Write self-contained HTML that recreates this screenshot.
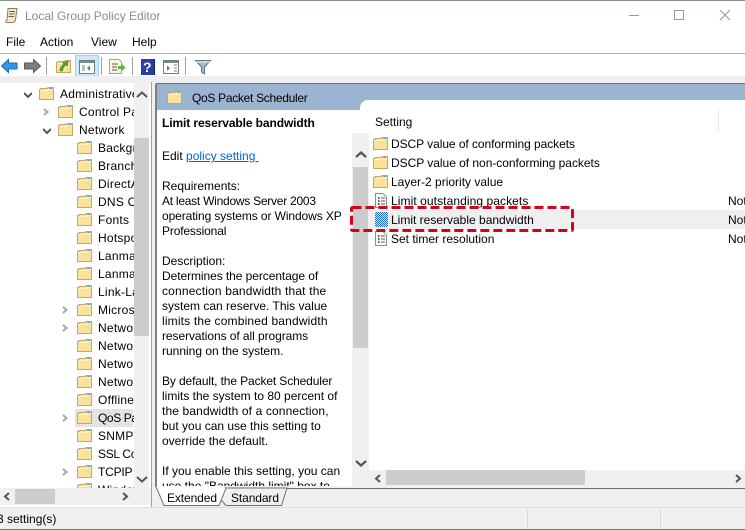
<!DOCTYPE html>
<html><head><meta charset="utf-8"><style>
html,body{margin:0;padding:0;width:745px;height:530px;overflow:hidden;background:#fff}
body{position:relative;font:12px/15px "Liberation Sans",sans-serif;color:#000}
.b{position:absolute}
.t{position:absolute;white-space:nowrap;line-height:15px;transform:translateY(1px)}
.clip{position:absolute;overflow:hidden}
svg.i{position:absolute;overflow:visible}
#tree{position:absolute;left:0;top:82px;width:134px;height:406px;overflow:hidden}
#tree .t{letter-spacing:.25px}
#desc{position:absolute;left:157px;top:110px;width:195px;height:376px;overflow:hidden;background:#fff}
</style></head><body>
<svg width="0" height="0" style="position:absolute"><defs>
<symbol id="f" viewBox="0 0 15 14"><path d="M.5 12.500V2.500H2V1.500H8L9 .5H14.500V12.500Z" fill="#fbe19a" stroke="#c7a862"/><path d="M1 3.500H8.500L10 2.500H14" fill="none" stroke="#fff3c8"/><path d="M10 1.500H13.500" stroke="#57a0de" stroke-width="1"/></symbol>
<symbol id="d" viewBox="0 0 15 15"><path d="M2.500.5H10L13.500 4V14.500H2.500Z" fill="#fff" stroke="#8c8c8c"/><path d="M5 5H6.500M5 8H6.500M5 11H6.500" stroke="#222" stroke-width="1.600"/><path d="M8 5H12M8 8H12M8 11H12" stroke="#555"/></symbol>
<symbol id="c" viewBox="0 0 8 8"><path d="M1 7L4.500 4L1 1" fill="none" stroke="#a6a6a6" stroke-width="2"/></symbol>
<symbol id="o" viewBox="0 0 8 8"><path d="M0 2L4 6L8 2" fill="none" stroke="#555" stroke-width="2"/></symbol>
<pattern id="ck" width="2" height="2" patternUnits="userSpaceOnUse"><rect width="2" height="2" fill="#1f72c8"/><rect width="1" height="1" fill="#cfe3f5"/><rect x="1" y="1" width="1" height="1" fill="#cfe3f5"/></pattern>
</defs></svg>

<!-- top strip -->
<div class="b" style="left:0;top:0;width:745px;height:1px;background:#8a9593"></div>
<!-- title -->
<svg class="i" style="left:5px;top:8px" width="13" height="15" viewBox="0 0 13 15"><path d="M3 .5H12L10.500 11.500Q10 14 8 14.500H1Q.5 12.500 2 12Z" fill="#f4e9c8" stroke="#8b7f5c"/><path d="M4.500 3.500H10M4 6H9.500M3.500 8.500H9" stroke="#6b6248"/></svg>
<div class="t" style="left:25px;top:8px;color:#8c8c8c;font-size:12px">Local Group Policy Editor</div>
<div class="b" style="left:629px;top:15px;width:10px;height:1px;background:#999"></div>
<div class="b" style="left:674px;top:10px;width:8px;height:8px;border:1px solid #999"></div>
<svg class="i" style="left:720px;top:10px" width="10" height="10"><path d="M0 0L10 10M10 0L0 10" stroke="#999"/></svg>
<!-- menu -->
<div class="t" style="left:6px;top:34px">File</div>
<div class="t" style="left:40px;top:34px">Action</div>
<div class="t" style="left:91px;top:34px">View</div>
<div class="t" style="left:132px;top:34px">Help</div>
<div class="b" style="left:0;top:53px;width:745px;height:1px;background:#b4b1bd"></div>
<!-- toolbar -->
<svg class="i" style="left:1px;top:59px" width="17" height="14"><path d="M7.500 .5L.5 7L7.500 13.500V10H16V4H7.500Z" fill="#2f95e4" stroke="#1a6bb0"/></svg>
<svg class="i" style="left:24px;top:59px" width="17" height="14"><path d="M9.500 .5L16.500 7L9.500 13.500V10H.5V4H9.500Z" fill="#7d7d7d" stroke="#5a5a5a"/></svg>
<div class="b" style="left:46px;top:57px;width:1px;height:18px;background:#a0a0a0"></div>
<svg class="i" style="left:56px;top:59px" width="15" height="15"><use href="#f" width="15" height="14" y="1"/><path d="M4 12C4 8 6 6 8 5L6.500 3.500L12 2.500L11.500 7L10 6C8 7 7 9 6.500 12Z" fill="#4aa52e" stroke="#2f7a1a" stroke-width=".5"/></svg>
<div class="b" style="left:75px;top:55px;width:22px;height:20px;background:#cce8ff;border:1px solid #99d1ff"></div>
<svg class="i" style="left:79px;top:60px" width="16" height="15"><rect x=".5" y=".5" width="15" height="13" fill="#fff" stroke="#6e7f80"/><rect x="1" y="1" width="14" height="2" fill="#7a8a8c"/><path d="M3 6H6M3 8H6M3 10H6" stroke="#6e7f80"/><path d="M11 5.500V11L8 8.200Z" fill="#2d9a4a"/></svg>
<div class="b" style="left:101px;top:57px;width:1px;height:18px;background:#a0a0a0"></div>
<svg class="i" style="left:109px;top:59px" width="17" height="15"><path d="M.5 .5H10L12.500 3V14.500H.5Z" fill="#fbf6dc" stroke="#a8a28a"/><path d="M3 5H9M3 8H8M3 11H8" stroke="#555"/><path d="M9 7H12.500V4.500L16.500 8.500L12.500 12.500V10H9Z" fill="#62b83f"/></svg>
<div class="b" style="left:132px;top:57px;width:1px;height:18px;background:#a0a0a0"></div>
<div class="b" style="left:141px;top:59px;width:13px;height:16px;background:#2a3f9e;border-right:1px solid #16236a"></div>
<div class="t" style="left:143px;top:58px;color:#fff;font:bold 14px/16px 'Liberation Sans',sans-serif">?</div>
<svg class="i" style="left:163px;top:60px" width="16" height="15"><rect x=".5" y=".5" width="15" height="13" fill="#fff" stroke="#6e7f80"/><rect x="1" y="1" width="14" height="2" fill="#7a8a8c"/><path d="M11 5H14M11 8H14M11 11H14" stroke="#6e7f80"/><path d="M4 5.500V11L7 8.200Z" fill="#2d9a4a"/></svg>
<div class="b" style="left:185px;top:57px;width:1px;height:18px;background:#a0a0a0"></div>
<svg class="i" style="left:195px;top:60px" width="16" height="15"><path d="M.5 .5H15.500L9.500 7V14L6.500 12V7Z" fill="#a9bccb" stroke="#64767f"/><path d="M1 2H15" stroke="#e8eef2"/></svg>
<!-- gray band -->
<div class="b" style="left:0;top:76px;width:745px;height:7px;background:#efefef"></div>
<div class="b" style="left:156px;top:83px;width:589px;height:1px;background:#6e6e6e"></div>
<div class="b" style="left:152px;top:82px;width:4px;height:425px;background:#f0f0f0"></div>
<div class="b" style="left:151px;top:82px;width:1px;height:425px;background:#a0a0a0"></div>
<div class="b" style="left:155px;top:84px;width:2px;height:403px;background:#7f7f7f"></div>
<!-- blue header -->
<div class="b" style="left:157px;top:84px;width:588px;height:26px;background:#9ab4d2"></div>
<svg class="i" style="left:167px;top:91px" width="15" height="14"><use href="#f" width="15" height="14"/></svg>
<div class="t" style="left:192px;top:90px;letter-spacing:-.3px">QoS Packet Scheduler</div>

<!-- right pane -->
<div class="b" style="left:360px;top:100px;width:385px;height:386px;background:#fff;border-top-left-radius:8px"></div>
<div class="b" style="left:352px;top:110px;width:8px;height:376px;background:#fff"></div>
<div class="t" style="left:375px;top:114px">Setting</div>
<div class="b" style="left:718px;top:110px;width:1px;height:23px;background:#e5e5e5"></div>
<div class="b" style="left:369px;top:210px;width:376px;height:19px;background:#efefef"></div>
<svg class="i" style="left:373px;top:137px" width="15" height="14"><use href="#f" width="15" height="14"/></svg>
<svg class="i" style="left:373px;top:156px" width="15" height="14"><use href="#f" width="15" height="14"/></svg>
<svg class="i" style="left:373px;top:175px" width="15" height="14"><use href="#f" width="15" height="14"/></svg>
<svg class="i" style="left:373px;top:193px" width="15" height="15"><use href="#d" width="15" height="15"/></svg>
<svg class="i" style="left:375px;top:212px" width="13" height="15"><rect x="0" y="0" width="13" height="15" fill="url(#ck)"/></svg>
<svg class="i" style="left:373px;top:231px" width="15" height="15"><use href="#d" width="15" height="15"/></svg>
<div class="t" style="left:391px;top:136px;letter-spacing:-.06px">DSCP value of conforming packets</div>
<div class="t" style="left:391px;top:155px;letter-spacing:-.03px">DSCP value of non-conforming packets</div>
<div class="t" style="left:391px;top:174px">Layer-2 priority value</div>
<div class="t" style="left:391px;top:193px;letter-spacing:.08px">Limit outstanding packets</div>
<div class="t" style="left:391px;top:212px">Limit reservable bandwidth</div>
<div class="t" style="left:391px;top:231px">Set timer resolution</div>
<div class="clip" style="left:728px;top:193px;width:17px;height:17px"><div class="t" style="left:0;top:0">Not</div></div>
<div class="clip" style="left:728px;top:212px;width:17px;height:17px"><div class="t" style="left:0;top:0">Not</div></div>
<div class="clip" style="left:728px;top:231px;width:17px;height:17px"><div class="t" style="left:0;top:0">Not</div></div>
<!-- right v-scroll -->
<div class="b" style="left:352px;top:133px;width:17px;height:353px;background:#f0f0f0"></div>
<div class="b" style="left:353px;top:167px;width:15px;height:181px;background:#cdcdcd"></div>
<svg class="i" style="left:355px;top:150px" width="12" height="9"><path d="M1 7L6 2.500L11 7" fill="none" stroke="#555" stroke-width="2.200"/></svg>
<svg class="i" style="left:355px;top:459px" width="12" height="9"><path d="M1 2L6 6.500L11 2" fill="none" stroke="#555" stroke-width="2.200"/></svg>
<!-- right h-scroll -->
<div class="b" style="left:369px;top:470px;width:376px;height:16px;background:#f0f0f0"></div>
<div class="b" style="left:386px;top:470px;width:199px;height:15px;background:#cdcdcd"></div>
<svg class="i" style="left:374px;top:474px" width="8" height="9"><path d="M6 1L2 4.500L6 8" fill="none" stroke="#555" stroke-width="2"/></svg>
<svg class="i" style="left:734px;top:474px" width="8" height="9"><path d="M2 1L6 4.500L2 8" fill="none" stroke="#555" stroke-width="2"/></svg>

<!-- description -->
<div id="desc">
<div class="t" style="left:5px;top:5px;font-weight:bold;letter-spacing:-.1px">Limit reservable bandwidth</div>
<div class="t" style="left:5px;top:38px">Edit <span style="color:#0066cc;text-decoration:underline">policy setting&nbsp;</span></div>
<div class="t" style="left:5px;top:68px">Requirements:</div>
<div class="t" style="left:5px;top:83px;letter-spacing:-.25px">At least Windows Server 2003</div>
<div class="t" style="left:5px;top:98px;letter-spacing:-.1px">operating systems or Windows XP</div>
<div class="t" style="left:5px;top:113px;letter-spacing:-.15px">Professional</div>
<div class="t" style="left:5px;top:143px">Description:</div>
<div class="t" style="left:5px;top:158px;letter-spacing:-.07px">Determines the percentage of</div>
<div class="t" style="left:5px;top:173px;letter-spacing:.17px">connection bandwidth that the</div>
<div class="t" style="left:5px;top:188px">system can reserve. This value</div>
<div class="t" style="left:5px;top:203px;letter-spacing:.17px">limits the combined bandwidth</div>
<div class="t" style="left:5px;top:218px;letter-spacing:-.07px">reservations of all programs</div>
<div class="t" style="left:5px;top:233px">running on the system.</div>
<div class="t" style="left:5px;top:263px;letter-spacing:-.12px">By default, the Packet Scheduler</div>
<div class="t" style="left:5px;top:278px">limits the system to 80 percent of</div>
<div class="t" style="left:5px;top:293px;letter-spacing:.13px">the bandwidth of a connection,</div>
<div class="t" style="left:5px;top:308px">but you can use this setting to</div>
<div class="t" style="left:5px;top:323px">override the default.</div>
<div class="t" style="left:5px;top:353px">If you enable this setting, you can</div>
<div class="t" style="left:5px;top:368px">use the "Bandwidth limit" box to</div>
</div>

<!-- tree -->
<div id="tree">
<svg class="i" style="left:24px;top:9px" width="8" height="7"><use href="#o" width="8" height="8"/></svg>
<svg class="i" style="left:43px;top:26px" width="7" height="9"><use href="#c" width="8" height="8"/></svg>
<svg class="i" style="left:43px;top:45px" width="8" height="7"><use href="#o" width="8" height="8"/></svg>
<svg class="i" style="left:62px;top:224px" width="7" height="9"><use href="#c" width="8" height="8"/></svg>
<svg class="i" style="left:62px;top:242px" width="7" height="9"><use href="#c" width="8" height="8"/></svg>
<svg class="i" style="left:62px;top:332px" width="7" height="9"><use href="#c" width="8" height="8"/></svg>
<svg class="i" style="left:62px;top:386px" width="7" height="9"><use href="#c" width="8" height="8"/></svg>
<div class="b" style="left:75px;top:327px;width:58px;height:18px;background:#e3e3e3"></div>
<svg class="i" style="left:39px;top:5px" width="15" height="14"><use href="#f" width="15" height="14"/></svg>
<svg class="i" style="left:58px;top:23px" width="15" height="14"><use href="#f" width="15" height="14"/></svg>
<svg class="i" style="left:58px;top:41px" width="15" height="14"><use href="#f" width="15" height="14"/></svg>
<svg class="i" style="left:77px;top:59px" width="15" height="14"><use href="#f" width="15" height="14"/></svg>
<svg class="i" style="left:77px;top:77px" width="15" height="14"><use href="#f" width="15" height="14"/></svg>
<svg class="i" style="left:77px;top:95px" width="15" height="14"><use href="#f" width="15" height="14"/></svg>
<svg class="i" style="left:77px;top:113px" width="15" height="14"><use href="#f" width="15" height="14"/></svg>
<svg class="i" style="left:77px;top:131px" width="15" height="14"><use href="#f" width="15" height="14"/></svg>
<svg class="i" style="left:77px;top:149px" width="15" height="14"><use href="#f" width="15" height="14"/></svg>
<svg class="i" style="left:77px;top:167px" width="15" height="14"><use href="#f" width="15" height="14"/></svg>
<svg class="i" style="left:77px;top:185px" width="15" height="14"><use href="#f" width="15" height="14"/></svg>
<svg class="i" style="left:77px;top:203px" width="15" height="14"><use href="#f" width="15" height="14"/></svg>
<svg class="i" style="left:77px;top:221px" width="15" height="14"><use href="#f" width="15" height="14"/></svg>
<svg class="i" style="left:77px;top:239px" width="15" height="14"><use href="#f" width="15" height="14"/></svg>
<svg class="i" style="left:77px;top:257px" width="15" height="14"><use href="#f" width="15" height="14"/></svg>
<svg class="i" style="left:77px;top:275px" width="15" height="14"><use href="#f" width="15" height="14"/></svg>
<svg class="i" style="left:77px;top:293px" width="15" height="14"><use href="#f" width="15" height="14"/></svg>
<svg class="i" style="left:77px;top:311px" width="15" height="14"><use href="#f" width="15" height="14"/></svg>
<svg class="i" style="left:77px;top:329px" width="15" height="14"><use href="#f" width="15" height="14"/></svg>
<svg class="i" style="left:77px;top:347px" width="15" height="14"><use href="#f" width="15" height="14"/></svg>
<svg class="i" style="left:77px;top:365px" width="15" height="14"><use href="#f" width="15" height="14"/></svg>
<svg class="i" style="left:77px;top:383px" width="15" height="14"><use href="#f" width="15" height="14"/></svg>
<svg class="i" style="left:77px;top:401px" width="15" height="14"><use href="#f" width="15" height="14"/></svg>
<div class="t" style="left:60px;top:4px">Administrative Templates</div>
<div class="t" style="left:79px;top:22px">Control Panel</div>
<div class="t" style="left:79px;top:40px">Network</div>
<div class="t" style="left:98px;top:58px">Background</div>
<div class="t" style="left:98px;top:76px">BranchCache</div>
<div class="t" style="left:98px;top:94px">DirectAccess</div>
<div class="t" style="left:98px;top:112px">DNS Client</div>
<div class="t" style="left:98px;top:130px">Fonts</div>
<div class="t" style="left:98px;top:148px">Hotspot</div>
<div class="t" style="left:98px;top:166px">Lanman</div>
<div class="t" style="left:98px;top:184px">Lanman</div>
<div class="t" style="left:98px;top:202px">Link-Layer</div>
<div class="t" style="left:98px;top:220px">Microsoft</div>
<div class="t" style="left:98px;top:238px">Network</div>
<div class="t" style="left:98px;top:256px">Network</div>
<div class="t" style="left:98px;top:274px">Network</div>
<div class="t" style="left:98px;top:292px">Network</div>
<div class="t" style="left:98px;top:310px">Offline</div>
<div class="t" style="left:98px;top:328px;letter-spacing:-.4px">QoS Packet</div>
<div class="t" style="left:98px;top:346px">SNMP</div>
<div class="t" style="left:98px;top:364px;letter-spacing:-.3px">SSL Config</div>
<div class="t" style="left:98px;top:382px;letter-spacing:-.2px">TCPIP Settings</div>
<div class="t" style="left:98px;top:400px">Windows</div>
</div>
<!-- tree v-scroll -->
<div class="b" style="left:134px;top:82px;width:15px;height:406px;background:#f0f0f0"></div>
<div class="b" style="left:134px;top:138px;width:15px;height:198px;background:#cdcdcd"></div>
<svg class="i" style="left:136px;top:90px" width="12" height="9"><path d="M1 7L6 2.500L11 7" fill="none" stroke="#555" stroke-width="2"/></svg>
<svg class="i" style="left:136px;top:475px" width="12" height="9"><path d="M1 2L6 6.500L11 2" fill="none" stroke="#555" stroke-width="2"/></svg>
<!-- tree h-scroll -->
<div class="b" style="left:0;top:488px;width:134px;height:17px;background:#f0f0f0"></div>
<div class="b" style="left:134px;top:488px;width:17px;height:17px;background:#f0f0f0"></div>
<div class="b" style="left:15px;top:489px;width:40px;height:15px;background:#cdcdcd"></div>
<svg class="i" style="left:3px;top:492px" width="8" height="9"><path d="M6 1L2 4.500L6 8" fill="none" stroke="#555" stroke-width="2"/></svg>
<svg class="i" style="left:121px;top:492px" width="8" height="9"><path d="M2 1L6 4.500L2 8" fill="none" stroke="#555" stroke-width="2"/></svg>

<!-- tabs strip -->
<div class="b" style="left:156px;top:486px;width:589px;height:21px;background:#f0f0f0"></div>
<div class="b" style="left:285px;top:488px;width:460px;height:1px;background:#6e6e6e"></div>
<svg class="i" style="left:155px;top:486px" width="135" height="21">
<path d="M70 2H132L126.500 19.500H71L66 14Z" fill="#f0f0f0" stroke="#6e6e6e"/>
<path d="M0.500 0.500H1L9 19.500H64L71 2H72" fill="#fff" stroke="#6e6e6e"/>
<path d="M1.500 0H69V1.500L63 19H9.500Z" fill="#fff"/>
</svg>
<div class="t" style="left:167px;top:490px;letter-spacing:-.1px">Extended</div>
<div class="t" style="left:231px;top:490px;letter-spacing:-.1px">Standard</div>
<!-- status -->
<div class="b" style="left:0;top:507px;width:745px;height:23px;background:#f0f0f0"></div>
<div class="b" style="left:0;top:507px;width:745px;height:1px;background:#dcdcdc"></div>
<div class="b" style="left:527px;top:509px;width:1px;height:19px;background:#d9d9d9"></div>
<div class="b" style="left:660px;top:509px;width:1px;height:19px;background:#d9d9d9"></div>
<div class="clip" style="left:0;top:509px;width:100px;height:19px"><div class="t" style="left:-3px;top:2px">3 setting(s)</div></div>
<div class="b" style="left:0;top:529px;width:745px;height:1px;background:#6f8080"></div>
<!-- red box -->
<svg class="i" style="left:349px;top:205px" width="226" height="28"><rect x="2.500" y="2.500" width="221" height="23" rx="1" fill="none" stroke="#d6001c" stroke-width="3" stroke-dasharray="9 4"/></svg>
</body></html>
